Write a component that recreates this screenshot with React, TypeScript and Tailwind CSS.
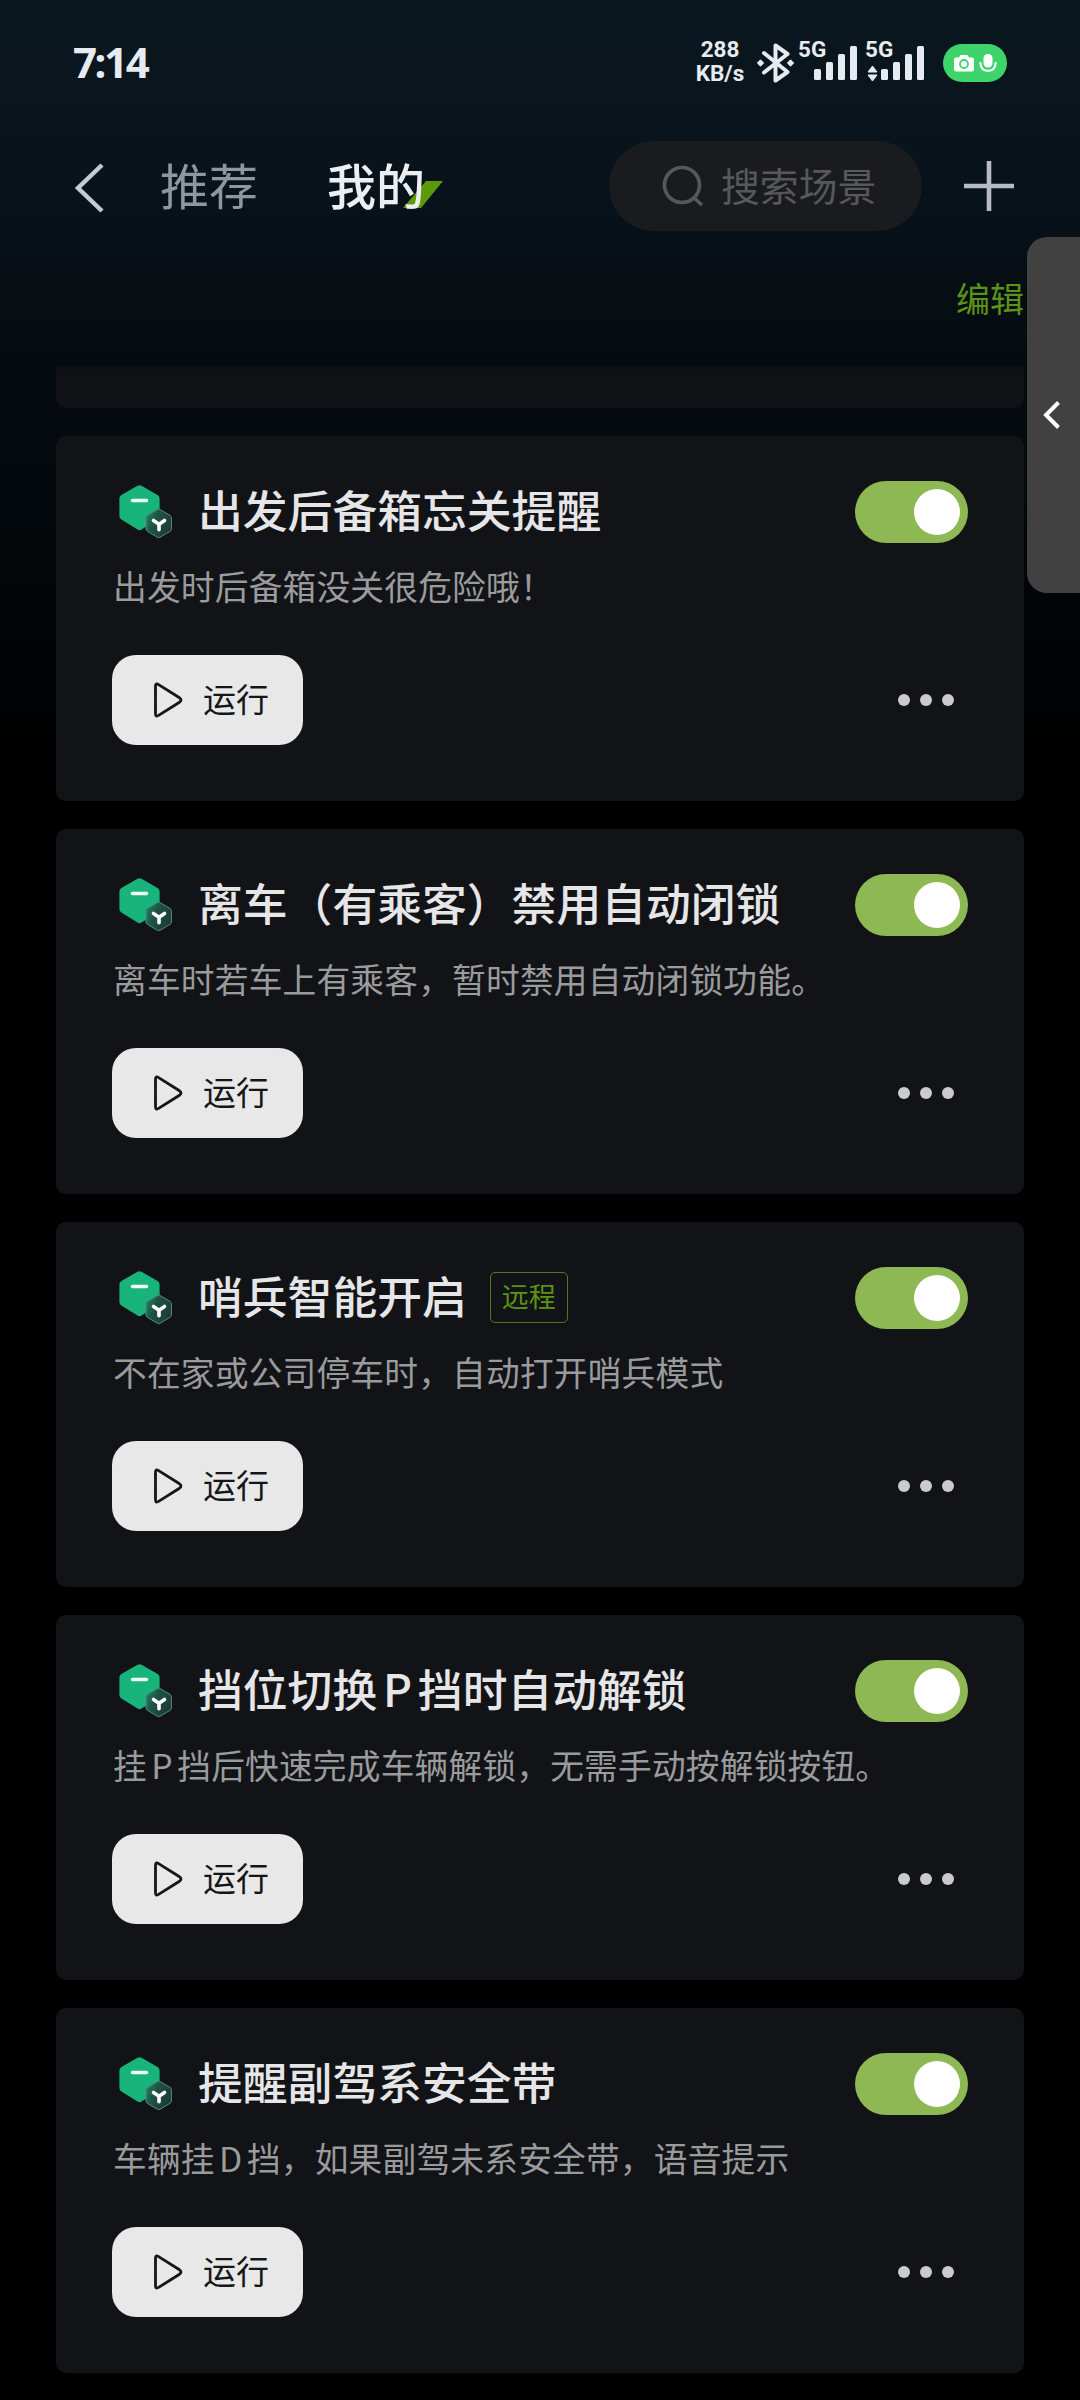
import React from "react";

type Scene = { title: React.ReactNode; desc: React.ReactNode; remote?: boolean };

const Gear = ({ children }: { children: string }) => (
  <span className="mx-[0.13em] inline-block">{children}</span>
);

const scenes: Scene[] = [
  { title: "出发后备箱忘关提醒", desc: "出发时后备箱没关很危险哦！" },
  { title: "离车（有乘客）禁用自动闭锁", desc: "离车时若车上有乘客，暂时禁用自动闭锁功能。" },
  { title: "哨兵智能开启", desc: "不在家或公司停车时，自动打开哨兵模式", remote: true },
  {
    title: <>挡位切换<Gear>P</Gear>挡时自动解锁</>,
    desc: <>挂<Gear>P</Gear>挡后快速完成车辆解锁，无需手动按解锁按钮。</>,
  },
  { title: "提醒副驾系安全带", desc: <>车辆挂<Gear>D</Gear>挡，如果副驾未系安全带，语音提示</> },
];

function SceneIcon() {
  return (
    <svg width="58" height="58" viewBox="0 0 58 58" className="block shrink-0">
      <defs>
        <linearGradient id="badge" x1="0" y1="0.1" x2="1" y2="0.6">
          <stop offset="0" stopColor="#1f8a66" />
          <stop offset="0.4" stopColor="#1d5445" />
          <stop offset="1" stopColor="#1f3a33" />
        </linearGradient>
      </defs>
      <path
        d="M25.500 5.800 Q27.500 4.600 29.500 5.800 L45.600 15 Q47.600 16.200 47.600 18.400 V36 Q47.600 38.200 45.600 39.400 L29.500 49.600 Q27.500 50.800 25.500 49.600 L9.400 39.400 Q7.400 38.200 7.400 36 V18.400 Q7.400 16.200 9.400 15 Z"
        fill="#18b47c"
      />
      <path d="M20.500 20.500 H34.500" stroke="#f4fffa" strokeWidth="3.400" strokeLinecap="round" />
      <path
        d="M46 29.500 Q47.300 28.700 48.600 29.500 L58.800 35.500 Q60 36.200 60 37.700 V49 Q60 50.500 58.800 51.200 L48.600 57.300 Q47.300 58 46 57.300 L35.800 51.200 Q34.600 50.500 34.600 49 V37.700 Q34.600 36.200 35.800 35.500 Z"
        transform="translate(-0.600 0)"
        fill="url(#badge)"
        stroke="#4f8f7c"
        strokeWidth="1"
      />
      <path
        d="M41.500 40.500 L47 44.200 L52.500 40.500 M47 44.200 V49.800"
        fill="none"
        stroke="#fff"
        strokeWidth="3.600"
        strokeLinecap="round"
        strokeLinejoin="round"
      />
    </svg>
  );
}

function SceneCard({ title, desc, remote }: Scene) {
  return (
    <section className="flex h-[365px] flex-col rounded-[10px] bg-[#121316] px-14 pt-[45px]">
      <div className="flex h-[62px] items-center">
        <div className="-mt-[7px] h-[58px] w-[86px] shrink-0 [&>svg]:overflow-visible">
          <SceneIcon />
        </div>
        <h2 className="-mt-[7px] whitespace-nowrap text-[44.800px] font-medium leading-[62px] text-[#e6e6e8]">{title}</h2>
        {remote && (
          <span className="-mt-[2px] ml-[23px] flex h-[51px] w-[78px] items-center justify-center rounded-[5px] border-[1.500px] border-[#4f7a1c] text-[27px] leading-none text-[#5b9414]">
            <span className="-mt-1">远程</span>
          </span>
        )}
        <div className="ml-auto flex h-[62px] w-[113px] items-center justify-end rounded-full bg-[#8eb854] pr-2">
          <div className="size-[46px] rounded-full bg-white" />
        </div>
      </div>
      <p className="ml-px mt-[18px] h-[50px] whitespace-nowrap text-[33.700px] leading-[50px] tracking-[0.220px] text-[#9a9b9d]">{desc}</p>
      <div className="mt-11 flex items-center justify-between">
        <button className="flex h-[90px] w-[191px] items-center rounded-3xl bg-[#e8e8e8] pl-[41px] text-[#151618]">
          <svg width="30" height="36" viewBox="0 0 30 36" fill="none" className="block">
            <path
              d="M2.500 4.200 Q2.500 0.800 5.600 2.600 L26.500 15.800 Q29.500 18 26.500 20.200 L5.600 33.400 Q2.500 35.200 2.500 31.800 Z"
              stroke="#151618"
              strokeWidth="2.800"
              strokeLinejoin="round"
            />
          </svg>
          <span className="-mt-[5px] ml-5 text-[33px] leading-[50px]">运行</span>
        </button>
        <div className="mr-[14px] flex gap-[10px]">
          <i className="size-3 rounded-full bg-[#cbcbcc]" />
          <i className="size-3 rounded-full bg-[#cbcbcc]" />
          <i className="size-3 rounded-full bg-[#cbcbcc]" />
        </div>
      </div>
    </section>
  );
}

function StatusBar() {
  return (
    <div className="flex h-[128px] items-start pl-[73px] font-['Noto_Sans'] font-bold text-[#e6ebf1]">
      <div className="mt-[32px] w-[622px] text-[42px] leading-[60px] tracking-[-2.400px]">7:14</div>
      <div className="mt-[37px] flex w-[50px] flex-col items-center font-['Roboto'] text-[22.500px] leading-[24px]">
        <span>288</span>
        <span>KB/s</span>
      </div>
      <svg width="40" height="44" viewBox="0 0 40 44" className="ml-[11px] mt-[41px]" fill="none">
        <path
          d="M8 12 L31.500 31 L19.500 39.500 V4.500 L31.500 13 L8 31.500"
          stroke="#e6ebf1"
          strokeWidth="4"
          strokeLinecap="round"
          strokeLinejoin="round"
        />
        <path d="M4.500 18.800 L7.700 22 L4.500 25.200 L1.300 22 Z M34.500 18.800 L37.700 22 L34.500 25.200 L31.300 22 Z" fill="#e6ebf1" stroke="#e6ebf1" strokeLinejoin="round" />
      </svg>
      <Signal />
      <Signal arrows />
      <div className="ml-[13px] mt-[44px] flex h-[38px] w-16 items-center justify-center gap-[5px] rounded-full bg-[#3fd46b]">
        <svg width="20" height="18" viewBox="0 0 20 18">
          <path d="M2 3.500 H5 L6.500 1 H13.500 L15 3.500 H18 Q20 3.500 20 5.500 V15.500 Q20 17.500 18 17.500 H2 Q0 17.500 0 15.500 V5.500 Q0 3.500 2 3.500 Z" fill="#fff" />
          <circle cx="10" cy="10" r="4" fill="none" stroke="#3fd46b" strokeWidth="1.800" />
        </svg>
        <svg width="18" height="19" viewBox="0 0 18 19">
          <rect x="4.500" y="0" width="9" height="13.500" rx="4.500" fill="#fff" />
          <path d="M1.300 9 Q2 16.800 9 16.800 Q16 16.800 16.700 9" fill="none" stroke="#fff" strokeWidth="2.200" strokeLinecap="round" />
        </svg>
      </div>
    </div>
  );
}

function Signal({ arrows = false }: { arrows?: boolean }) {
  return (
    <div className="relative mt-[38px] h-[44px] w-[67px] shrink-0">
      <span className="absolute -top-px left-[2px] font-['Roboto'] text-[22.500px] leading-[24px]">5G</span>
      <svg width="67" height="44" viewBox="0 0 67 44" fill="#e6ebf1" className="block">
        <rect x="18" y="31" width="7" height="11" rx="1.500" />
        <rect x="30" y="24" width="7" height="18" rx="1.500" />
        <rect x="42" y="16" width="7" height="26" rx="1.500" />
        <rect x="54" y="8" width="7" height="34" rx="1.500" />
        {arrows && <path d="M5 34 L9.500 28 L14 34 Z M5 37 H14 L9.500 43 Z" stroke="#e6ebf1" strokeLinejoin="round" />}
      </svg>
    </div>
  );
}

export default function App() {
  return (
    <main className="relative h-[2400px] w-[1080px] overflow-hidden bg-black bg-[linear-gradient(180deg,#0b171e_0px,#08121a_200px,#060d13_300px,#03090d_480px,#000000_760px)] font-['Noto_Sans_CJK_SC',sans-serif]">
      <StatusBar />
      <header className="flex h-[116px] items-center pl-[74px]">
        <svg width="30" height="50" viewBox="0 0 30 50" fill="none" className="mt-[3px]">
          <path d="M28 2 L4 25 L28 48" stroke="#c6cbcf" strokeWidth="4.500" />
        </svg>
        <span className="-mt-[5px] ml-[56px] text-[49px] leading-[70px] text-[#8f969c]">推荐</span>
        <div className="relative ml-[69px]">
          <svg width="40" height="28" viewBox="0 0 40 28" className="absolute left-[76px] top-[27px]">
            <path d="M23 0 H40 L18 27 H0 Z" fill="#5c9a0c" />
          </svg>
          <span className="relative -mt-[5px] block text-[49px] font-medium leading-[70px] text-[#eceff1]">我的</span>
        </div>
        <div className="ml-[184px] flex h-[90px] w-[313px] items-center rounded-full bg-[#1a1b1f] pl-[53px] text-[#57585b]">
          <svg width="42" height="42" viewBox="0 0 42 42" fill="none" stroke="currentColor" strokeWidth="3.600">
            <circle cx="20" cy="20" r="17.500" />
            <path d="M31.500 32.500 L40 40" />
          </svg>
          <span className="-mt-[5px] ml-[17px] text-[38.800px] leading-[56px]">搜索场景</span>
        </div>
        <svg width="52" height="52" viewBox="0 0 52 52" className="ml-[41px]" stroke="#b6bcc2" strokeWidth="4.600">
          <path d="M1 26 H51 M26 1 V51" />
        </svg>
      </header>
      <div className="flex h-[123px] justify-end pr-[56px] pt-[29px]">
        <span className="text-[34px] leading-[50px] text-[#5b9414]">编辑</span>
      </div>
      <div className="flex flex-col gap-7 px-14">
        <div className="h-[41px] rounded-b-[10px] bg-[linear-gradient(180deg,#0c1014_0px,#111216_14px)]" />
        {scenes.map((s, i) => (
          <SceneCard key={i} {...s} />
        ))}
      </div>
      <aside className="absolute right-0 top-[237px] flex h-[356px] w-[53px] items-center rounded-l-[20px] bg-[#414141] pl-4">
        <svg width="18" height="28" viewBox="0 0 18 28" fill="none">
          <path d="M15.500 1.500 L3 14 L15.500 26.500" stroke="#fff" strokeWidth="4" />
        </svg>
      </aside>
    </main>
  );
}
